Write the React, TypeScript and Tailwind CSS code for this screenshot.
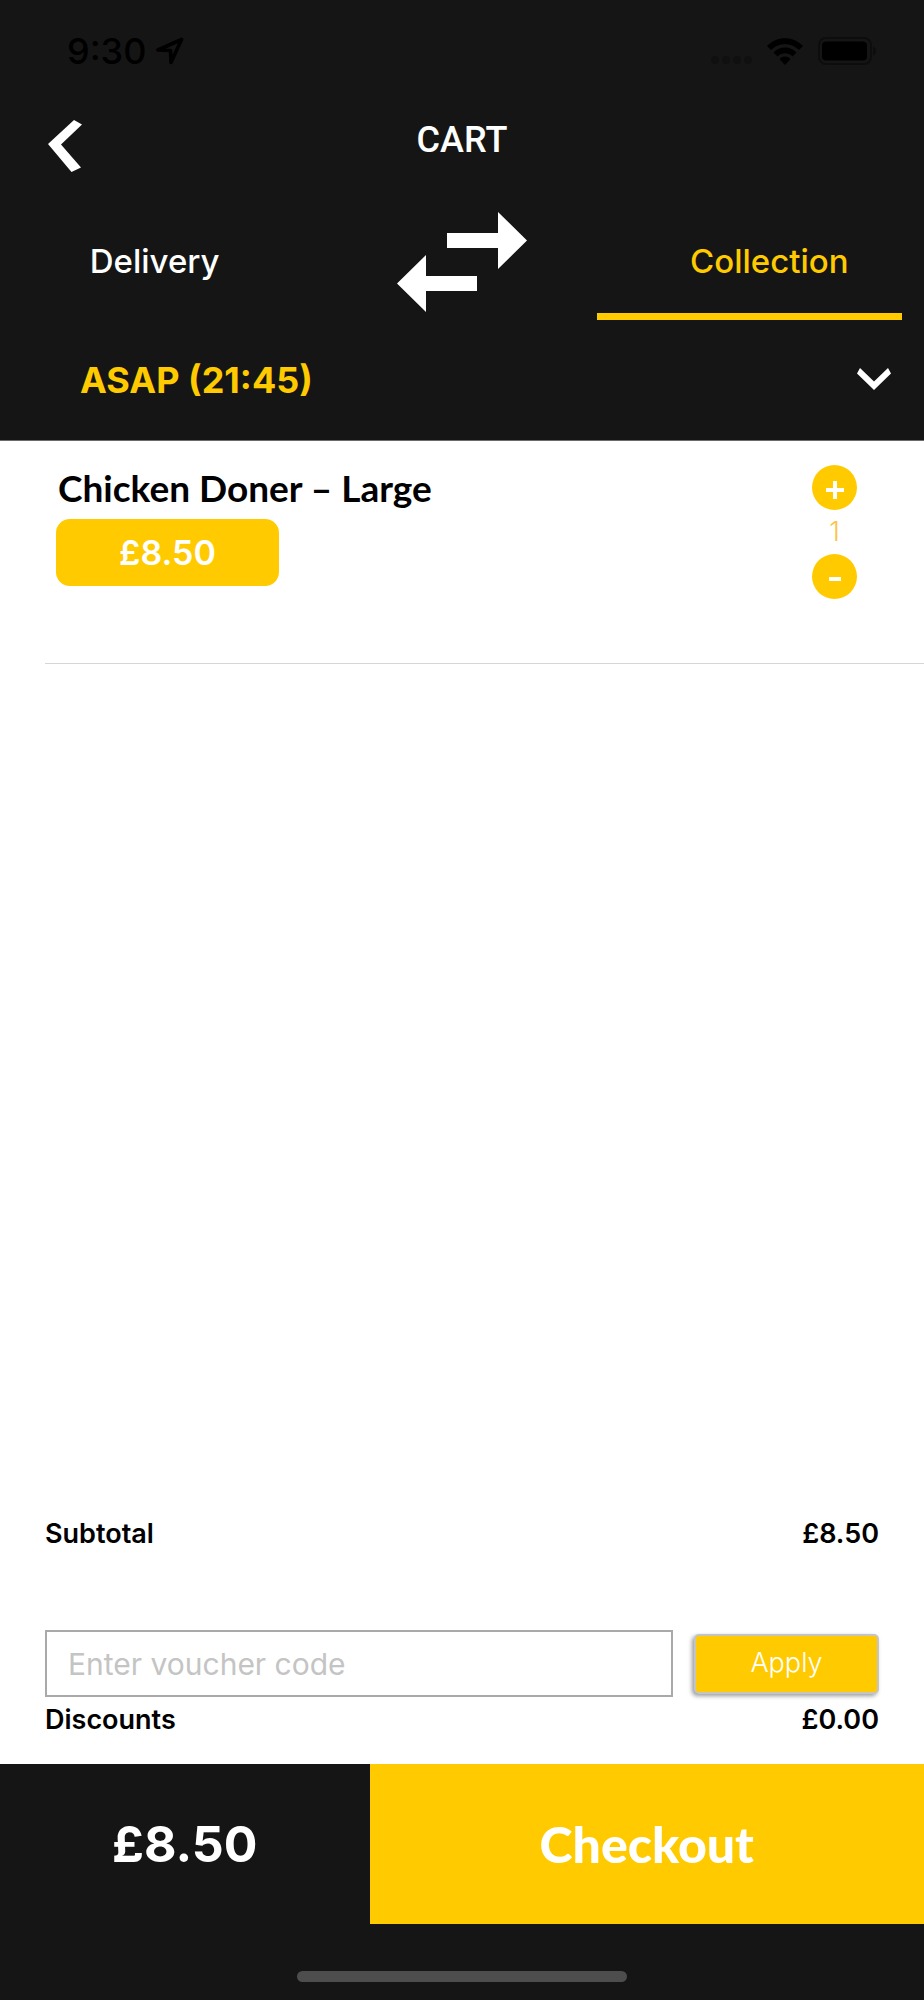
import { useState } from "react";

function StatusBar() {
  return (
    <div className="flex h-[102px] items-center justify-between pr-[46px] pl-[67px] text-black">
      <div className="flex items-center gap-2.5">
        <span className="text-4xl font-medium">9:30</span>
        <svg className="h-7 w-7" viewBox="0 0 28 28" fill="none" stroke="currentColor" strokeWidth="3.6" strokeLinejoin="round">
          <path d="M25.500 2.500 2 13l12.500.500.500 12Z" />
        </svg>
      </div>
      <div className="flex items-center gap-[15px]">
        <svg className="mt-[18px] h-2 w-[42px]" viewBox="0 0 42 8" fill="#101010">
          <circle cx="5" cy="4" r="4" />
          <circle cx="16" cy="4" r="4" />
          <circle cx="27" cy="4" r="4" />
          <circle cx="38" cy="4" r="4" />
        </svg>
        <svg className="h-[27px] w-9" viewBox="0 0 36 27" fill="currentColor">
          <path d="M0 8C10-2.500 26-2.500 36 8l-4 4C24 4 12 4 4 12Z" />
          <path d="M6.500 14.500c6.500-6.700 16.500-6.700 23 0l-4 4c-4.300-4.200-10.700-4.200-15 0Z" />
          <path d="M12.500 21c3-3.200 8-3.200 11 0L18 27Z" />
        </svg>
        <svg className="h-7 w-[60px]" viewBox="0 0 60 28">
          <rect x="1" y="1" width="52" height="26" rx="7" fill="none" stroke="#0d0d0d" strokeWidth="2" />
          <rect x="4" y="4.500" width="45" height="19" rx="4" fill="currentColor" />
          <path d="M55 9.500c4 1 4 8 0 9Z" fill="#0d0d0d" />
        </svg>
      </div>
    </div>
  );
}

export default function App() {
  const [mode, setMode] = useState("collection");
  const [quantity, setQuantity] = useState(1);
  const total = `£${(8.5 * quantity).toFixed(2)}`;

  return (
    <div className="flex min-h-screen flex-col bg-white font-['Inter',sans-serif] text-black">
      <header className="border-b border-[#6b6b6b] bg-[#151515] text-white">
        <StatusBar />

        {/* Title */}
        <div className="grid h-[88px] grid-cols-[1fr_auto_1fr] items-center px-12">
          <button type="button" aria-label="Back" className="justify-self-start">
            <svg className="h-[52px] w-[34px]" viewBox="0 0 34 52" fill="currentColor">
              <path d="M26 0 34 4.500 13 24.500 33 47.500 23.500 52 0 24Z" />
            </svg>
          </button>
          <h1 className="pb-3 font-['Roboto',sans-serif] text-4xl leading-none font-medium">CART</h1>
        </div>

        {/* Delivery / collection switch */}
        <div className="mt-3.5 grid h-[116px] grid-cols-3 px-[22px] text-[33px] font-medium">
          <button
            type="button"
            onClick={() => setMode("delivery")}
            className={mode === "delivery" ? "mr-[-12px] border-y-[7px] border-t-transparent border-b-[#ffcb00] pr-10 text-[#ffcb00]" : "mr-[-12px] border-y-[7px] border-transparent pr-10"}
          >
            Delivery
          </button>
          <div className="flex items-center justify-center">
            <svg className="h-[100px] w-[130px]" viewBox="0 0 130 100" fill="currentColor">
              <path d="M50 21h51V0l29 28.500L101 57V36H50Z" />
              <path d="M80 64H29V43L0 71.500 29 100V79H80Z" />
            </svg>
          </div>
          <button
            type="button"
            onClick={() => setMode("collection")}
            className={mode === "collection" ? "ml-[-12px] border-y-[7px] border-t-transparent border-b-[#ffcb00] pl-10 text-[#ffcb00]" : "ml-[-12px] border-y-[7px] border-transparent pl-10"}
          >
            Collection
          </button>
        </div>

        {/* Time slot */}
        <div className="relative h-[120px]">
          <select aria-label="Collection time" className="h-full w-full appearance-none pr-20 pl-20 text-4xl font-bold text-[#ffcb00]">
            <option>ASAP (21:45)</option>
          </select>
          <svg className="pointer-events-none absolute top-12 right-[33px] h-[22px] w-[34px]" viewBox="0 0 34 22" fill="currentColor">
            <path d="M3 0 17 13.500 31 0l3 5.500L17 22 0 5.500Z" />
          </svg>
        </div>
      </header>

      <main className="flex flex-1 flex-col">
        <section className="ml-[45px] flex h-[223px] justify-between border-b border-[#d6d6d6] pr-[67px] pl-[11px]">
          <div className="pt-6">
            <h2 className="pl-0.5 font-['Lato',sans-serif] text-[37px] leading-[46px] font-bold">Chicken Doner – Large</h2>
            <div className="mt-2 flex h-[67px] w-[223px] items-center justify-center rounded-[14px] bg-[#ffcb00] text-[34px] font-semibold text-white">
              £8.50
            </div>
          </div>
          <div className="flex flex-col items-center pt-6">
            <button
              type="button"
              aria-label="Add one"
              onClick={() => setQuantity(quantity + 1)}
              className="flex size-[45px] items-center justify-center rounded-full bg-[#ffcb00] text-white"
            >
              <svg className="mt-1 size-[18px]" viewBox="0 0 18 18" fill="currentColor">
                <path d="M7 0h4v7h7v4h-7v7H7v-7H0V7h7Z" />
              </svg>
            </button>
            <span className="text-[27px] leading-[44px] font-light text-[#ffc24a]">{quantity}</span>
            <button
              type="button"
              aria-label="Remove one"
              onClick={() => setQuantity(Math.max(0, quantity - 1))}
              className="flex size-[45px] items-center justify-center rounded-full bg-[#ffcb00] text-white"
            >
              <svg className="mt-1 h-1 w-3" viewBox="0 0 12 4" fill="currentColor">
                <path d="M0 0h12v4H0Z" />
              </svg>
            </button>
          </div>
        </section>

        {/* Totals */}
        <section className="mt-auto px-[45px] pb-6">
          <div className="flex justify-between text-[27px] leading-10 font-semibold">
            <span>Subtotal</span>
            <span>{total}</span>
          </div>
          <form className="mt-[76px] flex items-center gap-[21px]" onSubmit={(e) => e.preventDefault()}>
            <input
              type="text"
              aria-label="Voucher code"
              placeholder="Enter voucher code"
              className="h-[67px] min-w-0 flex-1 border-2 border-[#a9a9a9] px-[21px] text-[30px] placeholder:text-[#c4c4c4]"
            />
            <button type="submit" className="h-[60px] w-[185px] rounded-[5px] border-2 border-[#c4c4c4] bg-[#ffcb00] text-[27px] font-light text-white shadow-[-2px_2px_4px_rgba(0,0,0,0.4)]">
              Apply
            </button>
          </form>
          <div className="mt-[3px] flex justify-between text-[27px] leading-10 font-semibold">
            <span>Discounts</span>
            <span>£0.00</span>
          </div>
        </section>
      </main>

      <footer className="bg-[#151515] text-white">
        <div className="flex h-40 items-stretch">
          <div className="flex w-2/5 items-center justify-center text-[50px] font-bold">{total}</div>
          <button type="button" className="flex-1 bg-[#ffcb00] font-['Lato',sans-serif] text-[50px] font-black">
            Checkout
          </button>
        </div>
        <div className="flex h-[76px] justify-center pt-[47px]">
          <div className="h-[11px] w-[330px] rounded-full bg-[#4d4d4d]" />
        </div>
      </footer>
    </div>
  );
}
